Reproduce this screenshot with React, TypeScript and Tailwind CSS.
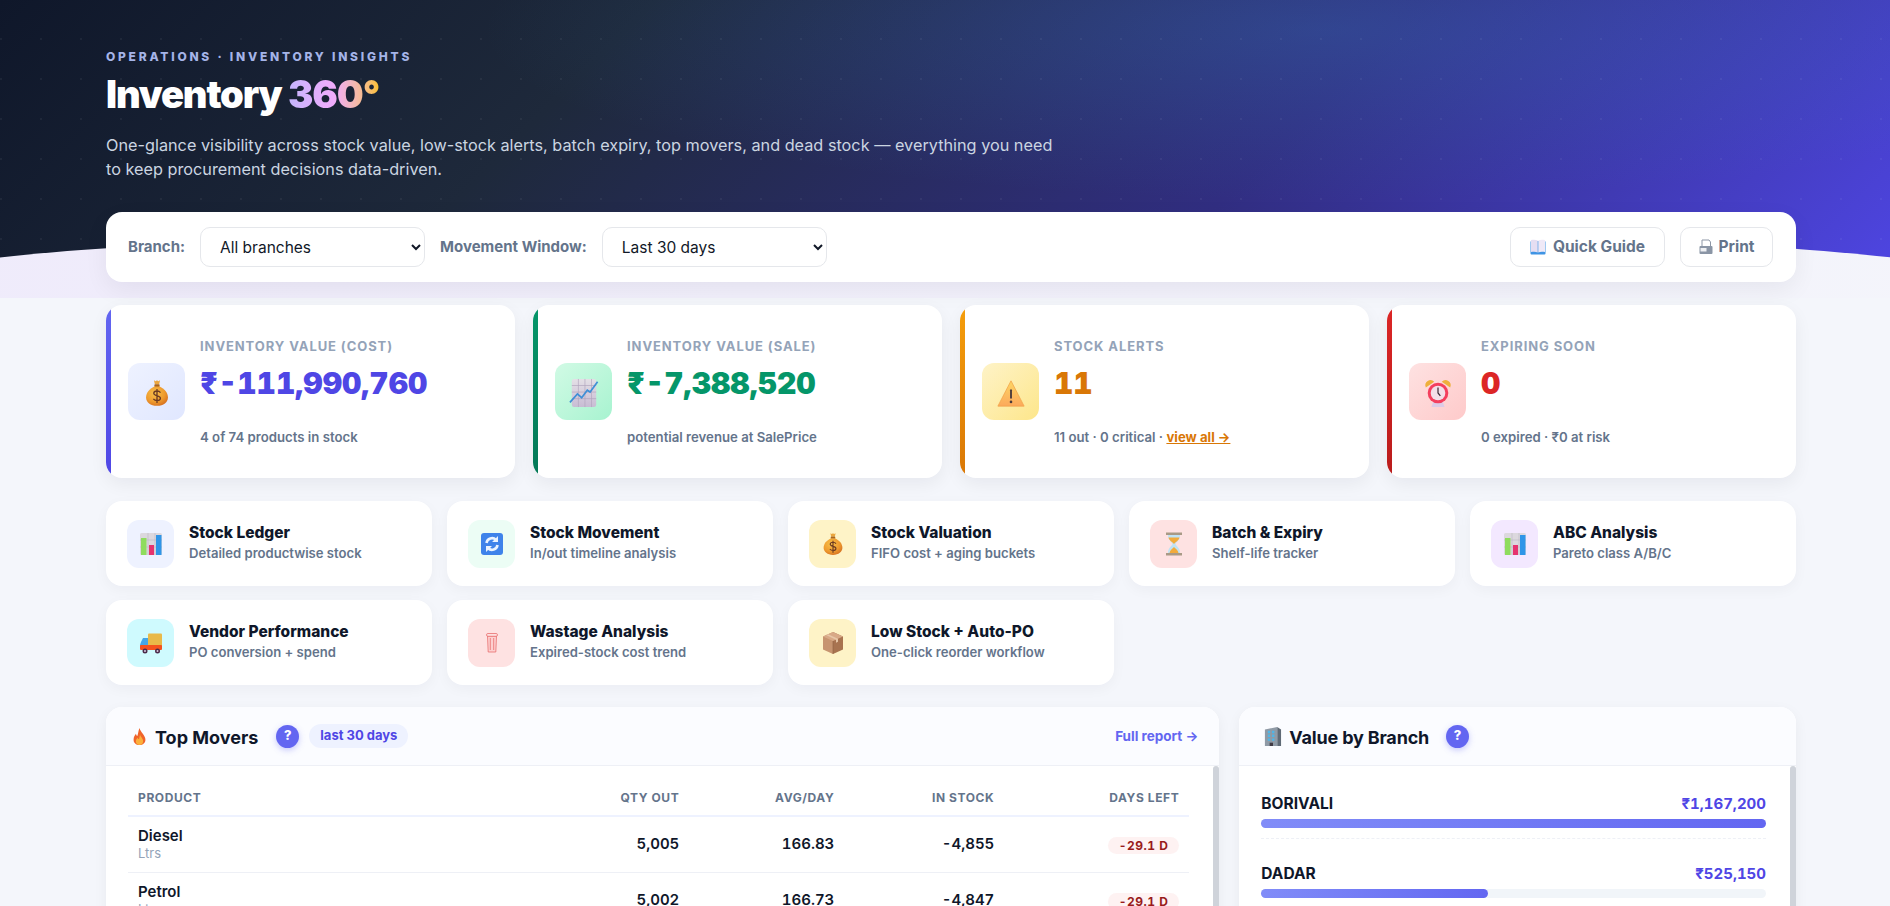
import React from "react";

const FONT = "font-['Inter','Noto_Sans',sans-serif]";

function MoneyBag({ size = 28, id = "bag" }: { size?: number; id?: string }) {
  return (
    <svg width={size} height={size} viewBox="0 0 32 32">
      <defs>
        <radialGradient id={id} cx="0.4" cy="0.35" r="0.75">
          <stop offset="0" stopColor="#f7c04a" />
          <stop offset="0.6" stopColor="#ee9a2e" />
          <stop offset="1" stopColor="#d2691e" />
        </radialGradient>
      </defs>
      <path d="M12.500 1.500l2 1 1.500-1 1.500 1 2-1-1 4.500h-5z" fill="#eaa63f" />
      <rect x="13" y="6" width="6" height="3" rx="0.800" fill="#a8641d" />
      <path d="M13 8.500C7.500 11 3.500 15.500 3.500 21c0 5.500 5 9.500 12.500 9.500s12.500-4 12.500-9.500c0-5.500-4-10-9.500-12.500z" fill={`url(#${id})`} />
      <path d="M20 15.500c-.9-1.200-2.300-1.800-4-1.800-2.100 0-3.700 1-3.700 2.700 0 3.700 7.600 1.900 7.600 5.600 0 1.600-1.600 2.700-3.900 2.700-1.700 0-3.200-.7-4.200-2M16 11.500v16" fill="none" stroke="#6b3a22" strokeWidth="1.500" />
    </svg>
  );
}

function ChartUp({ size = 30 }: { size?: number }) {
  return (
    <svg width={size} height={size} viewBox="0 0 32 32">
      <defs>
        <linearGradient id="paper" x1="0" y1="0" x2="0" y2="1">
          <stop offset="0" stopColor="#e4e0e6" />
          <stop offset="1" stopColor="#c8bcd4" />
        </linearGradient>
      </defs>
      <rect x="3" y="1" width="26" height="30" rx="2.500" fill="url(#paper)" />
      <path d="M3 8h26M3 15h26M3 22h26M10 1v30M17 1v30M24 1v30" stroke="#b0a4bc" strokeWidth=".7" />
      <path d="M1 26l8-9 4.500 4 6-8 3 2 8-11" fill="none" stroke="#3f8fd6" strokeWidth="1.800" />
    </svg>
  );
}

function Warn({ size = 30 }: { size?: number }) {
  return (
    <svg width={size} height={size} viewBox="0 0 32 32">
      <defs>
        <linearGradient id="warnfill" x1="0" y1="0" x2="0" y2="1">
          <stop offset="0" stopColor="#fdd663" />
          <stop offset="1" stopColor="#fca95c" />
        </linearGradient>
      </defs>
      <path d="M16 3 L30 30 H2 Z" fill="url(#warnfill)" stroke="#f2a34a" strokeWidth=".8" strokeLinejoin="round" />
      <rect x="15" y="12" width="2" height="10" rx="1" fill="#4b3b3b" />
      <circle cx="16" cy="25.500" r="1.400" fill="#4b3b3b" />
    </svg>
  );
}

function AlarmClock({ size = 30 }: { size?: number }) {
  return (
    <svg width={size} height={size} viewBox="0 0 32 32">
      <path d="M3 10a5.500 5.500 0 0 1 9-6z" fill="#eeb03c" />
      <path d="M29 10a5.500 5.500 0 0 0-9-6z" fill="#eeb03c" />
      <path d="M11 25l-2 6h14l-2-6z" fill="#dccbe6" />
      <circle cx="16" cy="16" r="11" fill="#f43f5e" />
      <circle cx="16" cy="16" r="7.800" fill="#f3dfe8" />
      <path d="M16 10v6l2.500 3" fill="none" stroke="#3b2a35" strokeWidth="1.300" />
    </svg>
  );
}

function BarsChart({ size = 24 }: { size?: number }) {
  return (
    <svg width={size} height={size} viewBox="0 0 24 24">
      <rect x="1" y="1" width="22" height="22" rx="1.500" fill="#dcd8de" />
      <path d="M1 8h22M1 15h22M9 1v22M16 1v22" stroke="#bdb8c2" strokeWidth=".6" />
      <rect x="2" y="6" width="5.500" height="17" fill="#8fdc5e" />
      <rect x="10" y="13" width="5" height="10" fill="#e6336f" />
      <rect x="17" y="3" width="5.500" height="20" fill="#2f95e8" />
    </svg>
  );
}

function Refresh({ size = 24 }: { size?: number }) {
  return (
    <svg width={size} height={size} viewBox="0 0 24 24">
      <rect x="1" y="1" width="22" height="22" rx="3" fill="#3f83ea" />
      <path d="M6.500 11a5.500 5.500 0 0 1 9.500-3M17.500 13a5.500 5.500 0 0 1-9.500 3" fill="none" stroke="#eaf3ff" strokeWidth="2.600" />
      <path d="M18 4v6h-6zM6 20v-6h6z" fill="#eaf3ff" />
    </svg>
  );
}

function Hourglass({ size = 24 }: { size?: number }) {
  return (
    <svg width={size} height={size} viewBox="0 0 24 24">
      <rect x="4" y="0.500" width="16" height="2.500" fill="#a99a86" />
      <rect x="4" y="21" width="16" height="2.500" fill="#a99a86" />
      <path d="M6 3h12c0 5.500-4 7-4.500 9 .5 2 4.500 3.500 4.500 9H6c0-5.500 4-7 4.500-9C10 10 6 8.500 6 3z" fill="#bfe3f5" />
      <path d="M6.500 5.500h11c-.5 3-4 4.500-5.500 6.500-1.500-2-5-3.500-5.500-6.500z" fill="#f2ab3c" />
      <path d="M12 15c-1.500 1.500-4 3-4.500 6h9c-.5-3-3-4.500-4.500-6z" fill="#f2ab3c" />
    </svg>
  );
}

function Truck({ size = 24 }: { size?: number }) {
  return (
    <svg width={size} height={size} viewBox="0 0 24 24">
      <rect x="9" y="2.500" width="14" height="15" rx="1" fill="#e9b949" />
      <path d="M2 11l2-4h5v10H1v-3z" fill="#44a6e8" />
      <rect x="1" y="14" width="22" height="5" rx="1" fill="#f4511e" />
      <circle cx="6" cy="20" r="2.500" fill="#4a2a4a" />
      <circle cx="18.500" cy="20" r="2.500" fill="#4a2a4a" />
      <circle cx="6" cy="20" r="1" fill="#d8c8e0" />
      <circle cx="18.500" cy="20" r="1" fill="#d8c8e0" />
    </svg>
  );
}

function Bin({ size = 24 }: { size?: number }) {
  return (
    <svg width={size} height={size} viewBox="0 0 24 24">
      <path d="M7.500 5h9l-.7 16h-7.600z" fill="#fdd0d0" stroke="#e86f6f" strokeWidth=".8" />
      <rect x="6.500" y="2.500" width="11" height="2.800" rx="1.400" fill="#fde0e0" stroke="#e86f6f" strokeWidth=".8" />
      <path d="M10.300 7v12M13.700 7v12" stroke="#e86f6f" strokeWidth=".8" />
    </svg>
  );
}

function Box({ size = 24 }: { size?: number }) {
  return (
    <svg width={size} height={size} viewBox="0 0 24 24">
      <path d="M12 1L22 5.500v13L12 23z" fill="#a87350" />
      <path d="M12 1L2 5.500v13L12 23z" fill="#c79470" />
      <path d="M2 5.500l10 4.500L22 5.500 12 1z" fill="#d8a987" />
      <path d="M12 10v13" stroke="#8e5e3f" strokeWidth=".6" />
      <path d="M7 3.200l10 4.500v3l-2 1v-3L5 4.100z" fill="#e7c6a7" />
    </svg>
  );
}

function Flame() {
  return (
    <svg width="13" height="17" viewBox="2.500 0 11 16" preserveAspectRatio="none">
      <path d="M8 0c.5 2.500 1.700 3.500 2.800 5.500C12 7.500 13 9 13 11c0 3-2 5-5 5s-5-2-5-5c0-2.500 1-4 2-5.500C5.300 7 5.700 7.500 6.200 7.500 7 5 7 2.500 8 0z" fill="#f0642a" />
      <path d="M8.500 6c0 2 2.600 3.500 2.600 6.500 0 2-1.300 3.500-3.100 3.500s-3.100-1.500-3.100-3.300c0-1.700.8-2.700 1.500-3.500.3 1 .7 1.300 1.200 1.300C8 9 8 7.500 8.500 6z" fill="#fbb03b" />
    </svg>
  );
}

function Office({ size = 19 }: { size?: number }) {
  return (
    <svg width={size} height={size} viewBox="0 0 20 20">
      <path d="M2 2.500L15 0v20H2z" fill="#8f9aa6" />
      <path d="M15 0l4 2.500V20h-4z" fill="#5f6a76" />
      {[4, 8, 12].map((y) => (
        <path key={y} d={`M5 ${y}h2.500v2.500H5zM9.500 ${y}H12v2.500H9.500z`} fill="#4fb6e8" />
      ))}
      <rect x="7" y="16.500" width="3.500" height="3.500" fill="#3f3a44" />
    </svg>
  );
}

function OpenBook() {
  return (
    <svg width="16" height="16" viewBox="0 0 16 16" className="inline-block">
      <rect x="0.500" y="2" width="15" height="13.500" rx="1" fill="#3f94e4" />
      <path d="M1 1c2.500-.5 5-.5 6.700.5v12C6 12.500 3.500 12.500 1 13z" fill="#e6def2" />
      <path d="M15 1c-2.500-.5-5-.5-6.700.5v12c1.700-1 4.200-1 6.700-.5z" fill="#efe9f7" />
    </svg>
  );
}

function Printer() {
  return (
    <svg width="14" height="16" viewBox="0 0 14 16" className="inline-block">
      <path d="M3 1h7l1.500 2v5H3z" fill="#ffffff" stroke="#8d97a6" strokeWidth="1" />
      <rect x="0.500" y="7" width="13" height="8" rx="1" fill="#8a95a5" />
      <rect x="1.500" y="9" width="6" height="3.500" fill="#eef0f3" />
    </svg>
  );
}

function HelpDot() {
  return (
    <span className="flex h-[23px] w-[23px] items-center justify-center rounded-full bg-[#6366f1] text-[13px] font-extrabold text-white shadow-[0_2px_6px_rgba(99,102,241,0.35)]">
      ?
    </span>
  );
}

const kpis = [
  {
    label: "INVENTORY VALUE (COST)",
    value: "₹-111,990,760",
    sub: "4 of 74 products in stock",
    bar: "bg-gradient-to-b from-[#6366f1] to-[#4f46e5]",
    tile: "bg-gradient-to-br from-[#eef2ff] to-[#e0e7ff]",
    color: "text-[#4f46e5]",
    icon: <MoneyBag />,
  },
  {
    label: "INVENTORY VALUE (SALE)",
    value: "₹-7,388,520",
    sub: "potential revenue at SalePrice",
    bar: "bg-gradient-to-b from-[#059669] to-[#047857]",
    tile: "bg-gradient-to-br from-[#d1fae5] to-[#a7f3d0]",
    color: "text-[#059669]",
    icon: <ChartUp />,
  },
  {
    label: "STOCK ALERTS",
    value: "11",
    sub: "11 out · 0 critical · ",
    link: "view all →",
    bar: "bg-gradient-to-b from-[#f59e0b] to-[#d97706]",
    tile: "bg-gradient-to-br from-[#fef3c7] to-[#fde68a]",
    color: "text-[#d97706]",
    icon: <Warn />,
  },
  {
    label: "EXPIRING SOON",
    value: "0",
    sub: "0 expired · ₹0 at risk",
    bar: "bg-gradient-to-b from-[#dc2626] to-[#b91c1c]",
    tile: "bg-gradient-to-br from-[#fee2e2] to-[#fecaca]",
    color: "text-[#dc2626]",
    icon: <AlarmClock />,
  },
];

const navCards = [
  { title: "Stock Ledger", sub: "Detailed productwise stock", tile: "bg-[#eef2ff]", icon: <BarsChart /> },
  { title: "Stock Movement", sub: "In/out timeline analysis", tile: "bg-[#ecfdf5]", icon: <Refresh /> },
  { title: "Stock Valuation", sub: "FIFO cost + aging buckets", tile: "bg-[#fef3c7]", icon: <MoneyBag size={24} id="bag2" /> },
  { title: "Batch & Expiry", sub: "Shelf-life tracker", tile: "bg-[#fee2e2]", icon: <Hourglass /> },
  { title: "ABC Analysis", sub: "Pareto class A/B/C", tile: "bg-[#f3e8ff]", icon: <BarsChart /> },
  { title: "Vendor Performance", sub: "PO conversion + spend", tile: "bg-[#cffafe]", icon: <Truck /> },
  { title: "Wastage Analysis", sub: "Expired-stock cost trend", tile: "bg-[#fee2e2]", icon: <Bin /> },
  { title: "Low Stock + Auto-PO", sub: "One-click reorder workflow", tile: "bg-[#fef3c7]", icon: <Box /> },
];

const movers = [
  { name: "Diesel", unit: "Ltrs", out: "5,005", avg: "166.83", stock: "-4,855", days: "-29.1 D" },
  { name: "Petrol", unit: "Ltrs", out: "5,002", avg: "166.73", stock: "-4,847", days: "-29.1 D" },
];

const branches = [
  { name: "BORIVALI", value: "₹1,167,200", pct: 100 },
  { name: "DADAR", value: "₹525,150", pct: 45 },
];

export default function App() {
  return (
    <div className={`relative h-screen overflow-hidden bg-[#f4f6fb] ${FONT}`}>
      {/* hero */}
      <div className="relative h-[298px] overflow-hidden bg-[linear-gradient(135deg,#0f172a_0%,#1e293b_30%,#312e81_65%,#4f46e5_100%)] pl-[106px] pr-[94px] pt-[49px]">
        <div className="absolute inset-0 bg-[radial-gradient(ellipse_at_70%_10%,rgba(56,130,200,0.28),transparent_45%)]" />
        <div className="absolute inset-0 bg-[radial-gradient(rgba(255,255,255,0.05)_1px,transparent_1px)] bg-[size:40px_40px] bg-[position:-19px_19px]" />
        <div className="absolute bottom-0 left-[-5%] h-[71px] w-[110%] rounded-[50%_50%_0_0/52px_52px_0_0] bg-gradient-to-r from-[#efebfb] to-[#f4f5fb]" />
        <div className="relative">
          <div className="text-[12px] font-extrabold leading-[16px] tracking-[0.23em] text-[#a5b4e8]">OPERATIONS · INVENTORY INSIGHTS</div>
          <h1 className="mt-[6px] text-[38px] font-black leading-[46px] tracking-[-0.03em] text-white">
            Inventory{" "}
            <span className="bg-gradient-to-r from-[#c4b5fd] via-[#f0abfc] to-[#fbbf24] bg-clip-text text-transparent">360°</span>
          </h1>
          <p className="mt-[16px] max-w-[950px] text-[16.25px] leading-[24px] text-[#cbd5e1]">
            One-glance visibility across stock value, low-stock alerts, batch expiry, top movers, and dead stock — everything you need to keep procurement decisions data-driven.
          </p>
        </div>
      </div>

      <div className="relative -mt-[86px] flex flex-col pl-[106px] pr-[94px]">
        {/* filter bar */}
        <div className="flex h-[70px] items-center gap-[15px] rounded-[16px] bg-white pl-[22px] pr-[23px] shadow-[0_8px_24px_rgba(15,23,42,0.06)]">
          <label className="text-[15px] font-bold text-[#64748b]">Branch:</label>
          <select className="h-[40px] w-[225px] rounded-[10px] border border-[#e5e7eb] bg-white pl-[15px] text-[15.5px] text-[#111827]">
            <option>All branches</option>
          </select>
          <label className="text-[15px] font-bold text-[#64748b]">Movement Window:</label>
          <select className="h-[40px] w-[225px] rounded-[10px] border border-[#e5e7eb] bg-white pl-[15px] text-[15.5px] text-[#111827]">
            <option>Last 30 days</option>
          </select>
          <div className="ml-auto flex gap-[15px]">
            <button className="flex h-[40px] w-[155px] items-center justify-center gap-[7px] rounded-[10px] border border-[#e5e7eb] bg-white text-[15.5px] font-bold text-[#64748b]">
              <OpenBook /> Quick Guide
            </button>
            <button className="flex h-[40px] w-[93px] items-center justify-center gap-[6px] rounded-[10px] border border-[#e5e7eb] bg-white text-[15.5px] font-bold text-[#64748b]">
              <Printer /> Print
            </button>
          </div>
        </div>

        {/* kpis */}
        <div className="mt-[23px] grid grid-cols-4 gap-[18px]">
          {kpis.map((k) => (
            <div key={k.label} className="relative flex h-[173px] items-center gap-[15px] overflow-hidden rounded-[16px] bg-white pl-[22px] shadow-[0_6px_18px_rgba(15,23,42,0.06)]">
              <span className={`absolute inset-y-0 left-0 w-[5px] ${k.bar}`} />
              <div className={`flex h-[57px] w-[57px] shrink-0 items-center justify-center rounded-[12px] pt-[3px] ${k.tile}`}>{k.icon}</div>
              <div className="flex min-w-0 flex-col">
                <div className="text-[13px] font-bold leading-[18px] tracking-[0.07em] text-[#94a3b8]">{k.label}</div>
                <div className={`mt-[10px] text-[30px] font-black leading-[36px] tabular-nums ${k.color}`}>{k.value}</div>
                <div className="mt-[27px] text-[13.2px] font-semibold leading-[18px] text-[#64748b]">
                  {k.sub}
                  {k.link && <a className="font-bold text-[#d97706] underline">{k.link}</a>}
                </div>
              </div>
            </div>
          ))}
        </div>

        {/* report links */}
        <div className="mt-[23px] grid grid-cols-5 gap-x-[15px] gap-y-[14px]">
          {navCards.map((c) => (
            <div key={c.title} className="flex h-[85px] items-center gap-[15px] rounded-[16px] bg-white px-[21px] shadow-[0_4px_14px_rgba(15,23,42,0.04)]">
              <div className={`flex h-[48px] w-[47px] shrink-0 items-center justify-center rounded-[12px] ${c.tile}`}>{c.icon}</div>
              <div className="-mt-[2px]">
                <div className="text-[15.5px] font-extrabold leading-[20px] text-[#0f172a]">{c.title}</div>
                <div className="mt-[1px] text-[13.1px] font-semibold leading-[18px] text-[#64748b]">{c.sub}</div>
              </div>
            </div>
          ))}
        </div>

        {/* panels */}
        <div className="mt-[22px] grid grid-cols-[2fr_1fr] gap-[20px]">
          <div className="rounded-t-[16px] bg-white shadow-[0_4px_14px_rgba(15,23,42,0.05)]">
            <div className="flex h-[59px] items-center rounded-t-[16px] border-b border-[#eef0f6] bg-[#fbfcff] pl-[27px] pr-[21px]">
              <Flame />
              <span className="ml-[9px] mt-[2px] text-[18px] font-bold text-[#0f172a]">Top Movers</span>
              <span className="ml-[18px]"><HelpDot /></span>
              <span className="ml-[10px] rounded-full bg-[#eef2ff] px-[11px] py-[2px] text-[13px] font-bold text-[#4f46e5]">last 30 days</span>
              <a className="ml-auto text-[13.5px] font-bold text-[#6366f1]">Full report →</a>
            </div>
            <div className="relative pl-[22px] pr-[30px] pt-[14px]">
              <span className="absolute right-0 top-0 h-[200px] w-[6px] rounded-full bg-[#cfd3da]" />
              <table className="w-full border-collapse">
                <thead>
                  <tr className="border-b-2 border-[#eef2ff] text-[12px] font-bold tracking-[0.05em] text-[#64748b]">
                    <th className="h-[36px] px-[10px] text-left font-bold">PRODUCT</th>
                    <th className="w-[110px] px-[10px] text-right font-bold">QTY OUT</th>
                    <th className="w-[155px] px-[10px] text-right font-bold">AVG/DAY</th>
                    <th className="w-[160px] px-[10px] text-right font-bold">IN STOCK</th>
                    <th className="w-[185px] px-[10px] text-right font-bold">DAYS LEFT</th>
                  </tr>
                </thead>
                <tbody>
                  {movers.map((m) => (
                    <tr key={m.name} className="border-b border-[#eef0f6]">
                      <td className="h-[56px] px-[10px]">
                        <div className="-mt-[1px] text-[15px] font-semibold leading-[19px] text-[#0f172a]">{m.name}</div>
                        <div className="text-[13px] leading-[17px] text-[#94a3b8]">{m.unit}</div>
                      </td>
                      <td className="px-[10px] text-right text-[15px] font-semibold tabular-nums text-[#0f172a]">{m.out}</td>
                      <td className="px-[10px] text-right text-[15px] font-semibold tabular-nums text-[#0f172a]">{m.avg}</td>
                      <td className="px-[10px] text-right text-[15px] font-semibold tabular-nums text-[#0f172a]">{m.stock}</td>
                      <td className="px-[10px] text-right">
                        <span className="inline-block rounded-full bg-[#fef2f2] px-[11px] py-[1px] text-[12px] font-bold leading-[15px] tabular-nums tracking-[0.04em] text-[#991b1b]">{m.days}</span>
                      </td>
                    </tr>
                  ))}
                </tbody>
              </table>
            </div>
          </div>

          <div className="rounded-t-[16px] bg-white shadow-[0_4px_14px_rgba(15,23,42,0.05)]">
            <div className="flex h-[59px] items-center rounded-t-[16px] border-b border-[#eef0f6] bg-[#fbfcff] pl-[24px]">
              <Office />
              <span className="ml-[7px] mt-[2px] text-[18px] font-bold tracking-[-0.01em] text-[#0f172a]">Value by Branch</span>
              <span className="ml-[17px]"><HelpDot /></span>
            </div>
            <div className="relative pl-[22px] pr-[30px] pt-[28px]">
              <span className="absolute right-0 top-0 h-[200px] w-[6px] rounded-full bg-[#cfd3da]" />
              {branches.map((b) => (
                <div key={b.name} className="mb-[25px] border-b border-dashed border-[#eef0f6] pb-[10px]">
                  <div className="flex items-center justify-between text-[15.5px] font-bold leading-[20px]">
                    <span className="text-[#0f172a]">{b.name}</span>
                    <span className="text-[15px] font-bold tabular-nums text-[#4f46e5]">{b.value}</span>
                  </div>
                  <div className="mt-[5px] h-[9px] rounded-full bg-[#f1f5f9]">
                    <div className="h-full rounded-full bg-gradient-to-r from-[#818cf8] to-[#6366f1]" style={{ width: `${b.pct}%` }} />
                  </div>
                </div>
              ))}
            </div>
          </div>
        </div>
      </div>
    </div>
  );
}
